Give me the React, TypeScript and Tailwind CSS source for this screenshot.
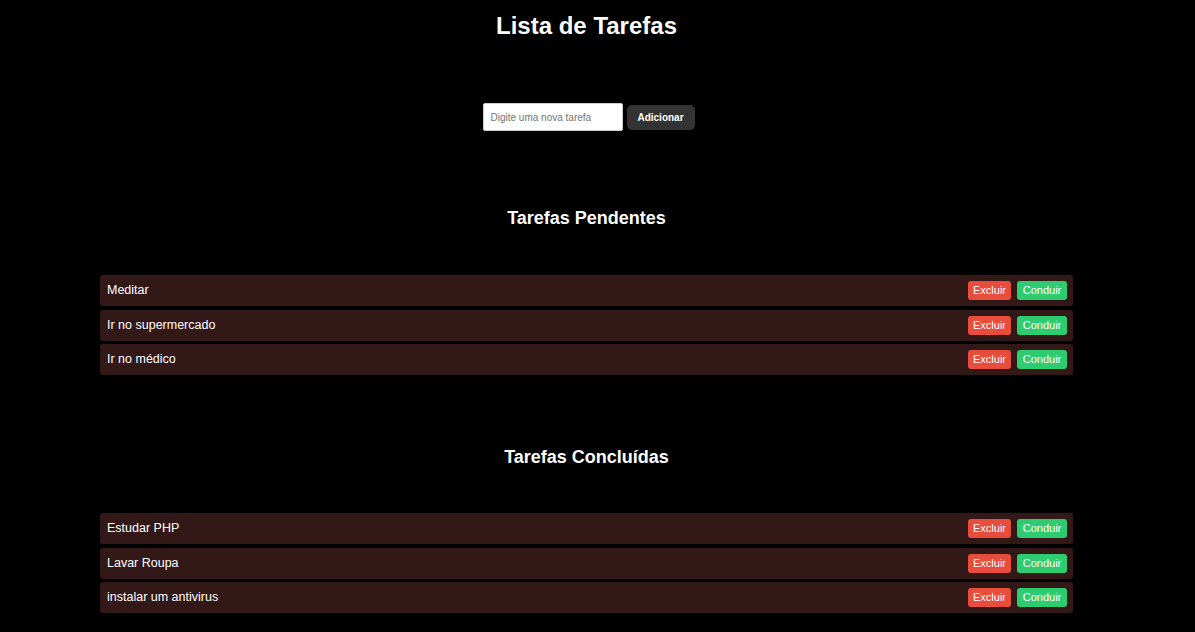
import { useState } from "react";

type Task = { id: number; text: string };

const pending: Task[] = [
  { id: 1, text: "Meditar" },
  { id: 2, text: "Ir no supermercado" },
  { id: 3, text: "Ir no médico" },
];

const done: Task[] = [
  { id: 4, text: "Estudar PHP" },
  { id: 5, text: "Lavar Roupa" },
  { id: 6, text: "instalar um antivirus" },
];

function TaskRow({ task }: { task: Task }) {
  return (
    <li className="flex h-[31px] items-center justify-between rounded-[3px] bg-[#331818] pl-[7px] pr-[6px]">
      <span className="text-[12.5px] text-white">{task.text}</span>
      <div className="flex items-center gap-[6px]">
        <button className="flex h-[19px] w-[43px] items-center justify-center rounded-[3px] bg-[#e74c3c] text-[11px] text-white">
          Excluir
        </button>
        <button className="flex h-[19px] w-[50px] items-center justify-center rounded-[3px] bg-[#2ecc71] text-[11px] text-white">
          Conduir
        </button>
      </div>
    </li>
  );
}

function TaskList({ tasks }: { tasks: Task[] }) {
  return (
    <ul className="mx-auto flex w-[973px] flex-col gap-[3.5px]">
      {tasks.map((t) => (
        <TaskRow key={t.id} task={t} />
      ))}
    </ul>
  );
}

export default function App() {
  const [value, setValue] = useState("");

  return (
    <div className="min-h-[632px] bg-black font-['Liberation_Sans',Arial,sans-serif] text-white">
      <div className="w-[1173px] pt-[12px]">
        <h1 className="text-center text-[24px] font-bold leading-[28px]">Lista de Tarefas</h1>

        <div className="ml-[4px] mt-[63px] flex items-center justify-center gap-[4px]">
          <input
            value={value}
            onChange={(e) => setValue(e.target.value)}
            placeholder="Digite uma nova tarefa"
            className="h-[28px] w-[140px] rounded-[2px] border border-[#ccc] bg-white px-[7px] text-[10px] text-black outline-none placeholder:text-[#757575]"
          />
          <button className="h-[25px] w-[68px] rounded-[5px] bg-[#333333] text-[10px] font-bold text-white">
            Adicionar
          </button>
        </div>

        <h2 className="mt-[76px] text-center text-[18px] font-bold leading-[22px]">Tarefas Pendentes</h2>
        <div className="mt-[46px]">
          <TaskList tasks={pending} />
        </div>

        <h2 className="mt-[71px] text-center text-[18px] font-bold leading-[22px]">Tarefas Concluídas</h2>
        <div className="mt-[45px]">
          <TaskList tasks={done} />
        </div>
      </div>
    </div>
  );
}
